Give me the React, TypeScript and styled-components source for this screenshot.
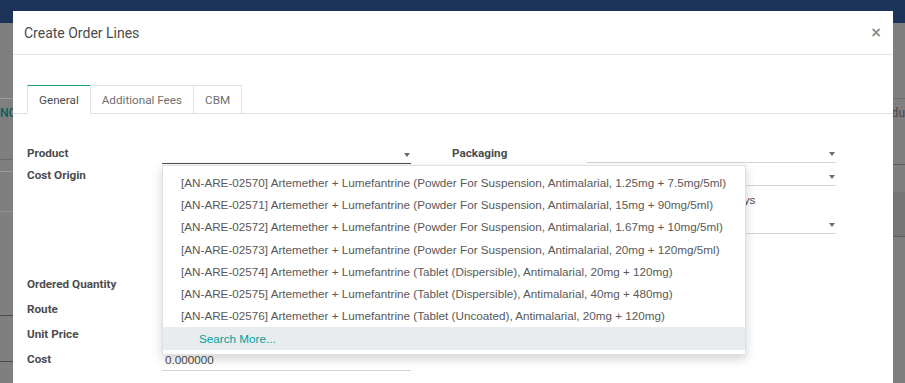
import styled, { createGlobalStyle } from 'styled-components';

const GlobalStyle = createGlobalStyle`
  html, body {
    margin: 0;
    padding: 0;
  }
  body {
    width: 905px;
    height: 383px;
    overflow: hidden;
    background: #7f7f7f;
    font-family: Roboto, 'Liberation Sans', sans-serif;
  }
`;

const Screen = styled.div`
  position: relative;
  width: 905px;
  height: 383px;
  overflow: hidden;
  display: flex;
  flex-direction: column;
  background: #7f7f7f;
`;

const NavBar = styled.div`
  flex: none;
  height: 23px;
  background: #1d345a;
`;

const BackBody = styled.div`
  flex: 1;
  display: grid;
  grid-template-columns: 1fr 1fr;
`;

const BackColumn = styled.div`
  display: flex;
  flex-direction: column;
`;

const BackRow = styled.div<{ $h: number; $line?: string; $shade?: boolean; $end?: boolean }>`
  flex: none;
  height: ${(p) => p.$h}px;
  box-sizing: border-box;
  border-bottom: 1px solid ${(p) => p.$line ?? 'transparent'};
  background: ${(p) => (p.$shade ? '#757575' : 'transparent')};
  display: flex;
  align-items: center;
  justify-content: ${(p) => (p.$end ? 'flex-end' : 'flex-start')};
  overflow: hidden;
  font-size: 12px;
  white-space: nowrap;
`;

const BackText = styled.span<{ $teal?: boolean }>`
  color: ${(p) => (p.$teal ? '#0b5e5c' : '#4a4a4a')};
  font-weight: ${(p) => (p.$teal ? 500 : 400)};
`;

const Modal = styled.div`
  position: absolute;
  top: 11px;
  left: 13px;
  width: 880px;
  height: 400px;
  background: #fff;
  display: flex;
  flex-direction: column;
`;

const ModalHeader = styled.header`
  flex: none;
  height: 44px;
  box-sizing: border-box;
  border-bottom: 1px solid #e6e6e6;
  display: flex;
  align-items: center;
  justify-content: space-between;
  padding: 0 11px 0 11px;
`;

const Title = styled.h4`
  margin: 0;
  font-size: 14px;
  font-weight: 400;
  color: #4a4a4a;
`;

const Close = styled.button`
  border: 0;
  background: none;
  padding: 0;
  font-family: 'DejaVu Sans', sans-serif;
  font-size: 14px;
  font-weight: 700;
  line-height: 1;
  color: #8c8c8c;
  margin-top: -2px;
`;

const TabBar = styled.nav`
  margin-top: 30px;
  display: flex;
  padding-left: 14px;
  border-bottom: 1px solid #dee2e6;
`;

const Tab = styled.div<{ $active?: boolean }>`
  height: 29px;
  box-sizing: border-box;
  margin-bottom: -1px;
  margin-left: -1px;
  padding: 0 11px;
  display: flex;
  align-items: center;
  font-size: 11.7px;
  color: ${(p) => (p.$active ? '#4a4a4a' : '#6f6f6f')};
  background: #fff;
  border: 1px solid #dee2e6;
  border-top-color: ${(p) => (p.$active ? '#1c9c7e' : '#dee2e6')};
  border-bottom-color: ${(p) => (p.$active ? '#fff' : '#dee2e6')};

  &:first-child {
    margin-left: 0;
  }
`;

const FormArea = styled.div`
  margin-top: 28px;
  padding-left: 14px;
  display: flex;
  gap: 41px;
  align-items: flex-start;
`;

const Group = styled.div`
  display: grid;
  grid-template-columns: 135px 249px;
`;

const Label = styled.label<{ $h: number }>`
  height: ${(p) => p.$h}px;
  display: flex;
  align-items: center;
  font-size: 11.7px;
  font-weight: 700;
  color: #4c4c4c;
`;

const Field = styled.div<{ $h: number; $focus?: boolean; $bare?: boolean }>`
  height: ${(p) => p.$h}px;
  box-sizing: border-box;
  border-bottom: 1px solid
    ${(p) => (p.$bare ? 'transparent' : p.$focus ? '#4f4f4f' : '#d4d4d4')};
  display: flex;
  align-items: flex-end;
  justify-content: space-between;
`;

const Value = styled.span<{ $indent?: number }>`
  align-self: center;
  padding: 2px 0 0 ${(p) => p.$indent ?? 3}px;
  font-family: 'Liberation Sans', Arial, sans-serif;
  font-size: 11.7px;
  color: #4a4a4a;
  white-space: nowrap;
`;

const Caret = styled.span`
  width: 0;
  height: 0;
  margin: 0 1px 6px auto;
  border-left: 3.5px solid transparent;
  border-right: 3.5px solid transparent;
  border-top: 4px solid #6a6a6a;
`;

const Spacer = styled.div<{ $h: number }>`
  grid-column: 1 / -1;
  height: ${(p) => p.$h}px;
`;

const Dropdown = styled.ul`
  position: absolute;
  top: 154px;
  left: 149px;
  width: 584px;
  box-sizing: border-box;
  margin: 0;
  padding: 5px 0 4px;
  list-style: none;
  background: #fff;
  border: 1px solid rgba(0, 0, 0, 0.12);
  box-shadow: 0 4px 10px rgba(0, 0, 0, 0.18);
`;

const Option = styled.li<{ $more?: boolean }>`
  height: ${(p) => (p.$more ? 22.5 : 22.3)}px;
  display: flex;
  align-items: center;
  padding-left: ${(p) => (p.$more ? 36 : 18)}px;
  font-family: 'Liberation Sans', Arial, sans-serif;
  font-size: 11.7px;
  white-space: nowrap;
  color: ${(p) => (p.$more ? '#00a09d' : '#595959')};
  background: ${(p) => (p.$more ? '#e9ecef' : 'transparent')};
`;

const options = [
  '[AN-ARE-02570] Artemether + Lumefantrine (Powder For Suspension, Antimalarial, 1.25mg + 7.5mg/5ml)',
  '[AN-ARE-02571] Artemether + Lumefantrine (Powder For Suspension, Antimalarial, 15mg + 90mg/5ml)',
  '[AN-ARE-02572] Artemether + Lumefantrine (Powder For Suspension, Antimalarial, 1.67mg + 10mg/5ml)',
  '[AN-ARE-02573] Artemether + Lumefantrine (Powder For Suspension, Antimalarial, 20mg + 120mg/5ml)',
  '[AN-ARE-02574] Artemether + Lumefantrine (Tablet (Dispersible), Antimalarial, 20mg + 120mg)',
  '[AN-ARE-02575] Artemether + Lumefantrine (Tablet (Dispersible), Antimalarial, 40mg + 480mg)',
  '[AN-ARE-02576] Artemether + Lumefantrine (Tablet (Uncoated), Antimalarial, 20mg + 120mg)',
];

export default function App() {
  return (
    <>
      <GlobalStyle />
      <Screen>
        <NavBar />
        <BackBody>
          <BackColumn>
            <BackRow $h={76} $line="#9c9c9c" />
            <BackRow $h={29}>
              <BackText $teal>NC</BackText>
            </BackRow>
            <BackRow $h={32} $line="#6a6a6a" />
            <BackRow $h={12} $line="#9a9a9a" />
            <BackRow $h={40} $line="#8e8e8e" />
            <BackRow $h={104} $line="#4a4a4a" />
            <BackRow $h={46} $line="#4a4a4a" />
          </BackColumn>
          <BackColumn>
            <BackRow $h={76} $line="#6e6e6e" />
            <BackRow $h={29} $end>
              <BackText>Produ</BackText>
            </BackRow>
            <BackRow $h={37} $line="#5e5e5e" />
            <BackRow $h={27} />
            <BackRow $h={45} $line="#5e5e5e" $shade />
          </BackColumn>
        </BackBody>

        <Modal>
          <ModalHeader>
            <Title>Create Order Lines</Title>
            <Close>×</Close>
          </ModalHeader>

          <TabBar>
            <Tab $active>General</Tab>
            <Tab>Additional Fees</Tab>
            <Tab>CBM</Tab>
          </TabBar>

          <FormArea>
            <Group>
              <Label $h={22}>Product</Label>
              <Field $h={22} $focus>
                <Caret />
              </Field>
              <Label $h={22}>Cost Origin</Label>
              <Field $h={22}>
                <Caret />
              </Field>
              <Spacer $h={85} />
              <Label $h={25}>Ordered Quantity</Label>
              <Field $h={25} $bare />
              <Label $h={25}>Route</Label>
              <Field $h={25} $bare />
              <Label $h={25}>Unit Price</Label>
              <Field $h={25} $bare />
              <Label $h={25}>Cost</Label>
              <Field $h={25}>
                <Value $indent={3}>0.000000</Value>
              </Field>
            </Group>

            <Group>
              <Label $h={21}>Packaging</Label>
              <Field $h={21}>
                <Caret />
              </Field>
              <Label $h={23} />
              <Field $h={23}>
                <Caret />
              </Field>
              <Label $h={26} />
              <Field $h={26} $bare>
                <Value $indent={132}>0 Days</Value>
              </Field>
              <Label $h={22} />
              <Field $h={22}>
                <Caret />
              </Field>
            </Group>
          </FormArea>

          <Dropdown>
            {options.map((o) => (
              <Option key={o}>{o}</Option>
            ))}
            <Option $more>Search More...</Option>
          </Dropdown>
        </Modal>
      </Screen>
    </>
  );
}
